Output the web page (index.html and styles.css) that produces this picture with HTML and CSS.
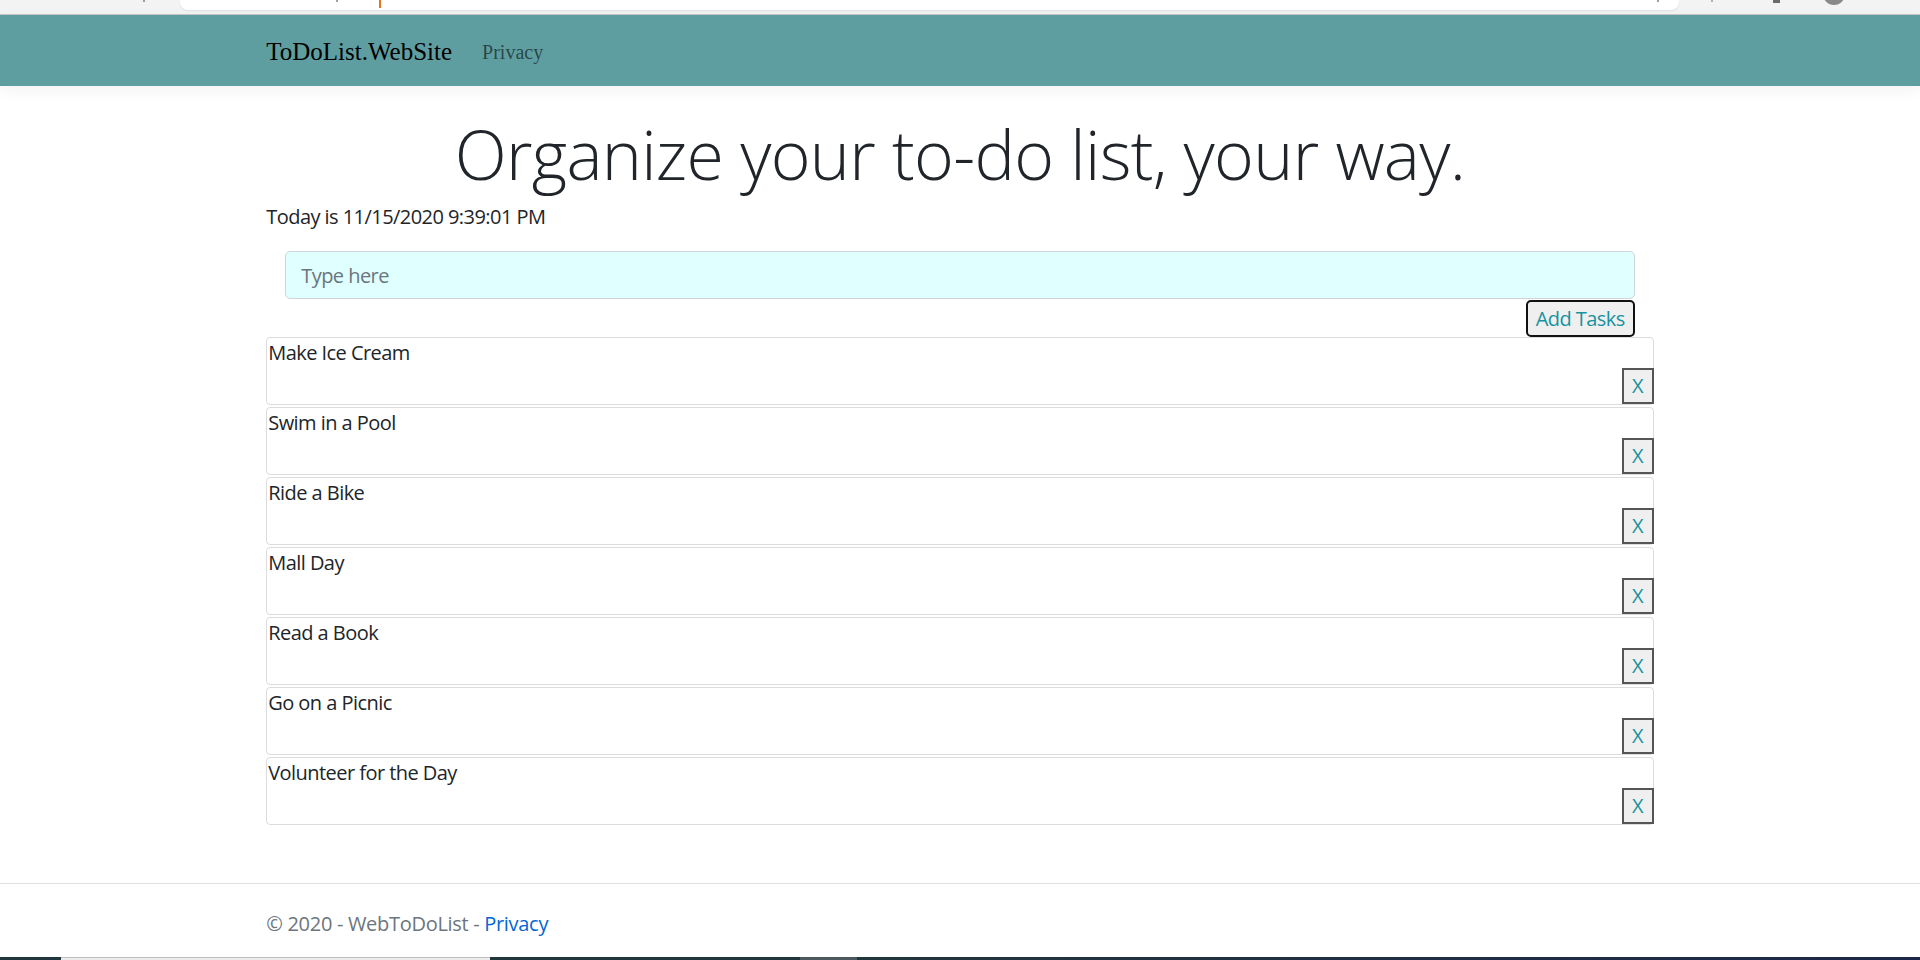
FILE: index.html
```html
<!DOCTYPE html>
<html lang="en">
<head>
<meta charset="utf-8">
<title>ToDoList.WebSite</title>
<link rel="stylesheet" href="styles.css">
</head>
<body>
<div class="page">
  <div class="chrome">
    <div class="chrome-left"><span class="tick"></span></div>
    <div class="addr">
      <span class="addr-mark"></span>
      <span class="addr-caret"></span>
      <span class="addr-spacer"></span>
      <span class="addr-mark"></span>
    </div>
    <div class="chrome-right">
      <span class="tick"></span>
      <span class="min-icon"></span>
      <span class="avatar"></span>
    </div>
  </div>

  <header class="navbar">
    <div class="container nav-inner">
      <a class="brand" href="#">ToDoList.WebSite</a>
      <a class="nav-link" href="#">Privacy</a>
    </div>
  </header>

  <main class="container main">
    <h1 class="display">Organize your to-do list, your way.</h1>
    <p class="today">Today is 11/15/2020 9:39:01 PM</p>
    <form class="add-form">
      <input class="task-input" type="text" placeholder="Type here">
      <div class="add-row">
        <button class="add-btn" type="button">Add Tasks</button>
      </div>
    </form>
    <ul class="tasks">
      <li class="task"><span class="task-text">Make Ice Cream</span><button class="del" type="button">X</button></li>
      <li class="task"><span class="task-text">Swim in a Pool</span><button class="del" type="button">X</button></li>
      <li class="task"><span class="task-text">Ride a Bike</span><button class="del" type="button">X</button></li>
      <li class="task"><span class="task-text">Mall Day</span><button class="del" type="button">X</button></li>
      <li class="task"><span class="task-text">Read a Book</span><button class="del" type="button">X</button></li>
      <li class="task"><span class="task-text">Go on a Picnic</span><button class="del" type="button">X</button></li>
      <li class="task"><span class="task-text">Volunteer for the Day</span><button class="del" type="button">X</button></li>
    </ul>
  </main>

  <footer class="footer">
    <div class="container footer-inner">© 2020 - WebToDoList - <a class="footer-link" href="#">Privacy</a></div>
  </footer>

  <div class="taskbar">
    <span class="tb-dark tb-start"></span>
    <span class="tb-light"></span>
    <span class="tb-dark tb-mid"></span>
    <span class="tb-grey"></span>
    <span class="tb-rest"></span>
  </div>
</div>
</body>
</html>
```

FILE: styles.css
```css
* { box-sizing: border-box; }

html, body {
  margin: 0;
  padding: 0;
  height: 100%;
}

body {
  font-family: "Open Sans", "Noto Sans", sans-serif;
  font-size: 20px;
  line-height: 1.5;
  letter-spacing: -0.55px;
  color: #212529;
  background: #fff;
}

.page {
  height: 960px;
  display: flex;
  flex-direction: column;
  overflow: hidden;
}

/* browser chrome remnant */
.chrome {
  height: 15px;
  flex: none;
  display: flex;
  background: #f3f3f3;
  border-bottom: 1px solid #c6c6c6;
}
.chrome-left {
  width: 180px;
  position: relative;
}
.chrome-left .tick {
  position: absolute;
  left: 143px;
  top: 0;
  width: 2px;
  height: 2px;
  background: #9a9a9a;
}
.addr {
  width: 1499px;
  height: 10px;
  background: #fff;
  border-radius: 0 0 8px 8px;
  box-shadow: 0 1px 2px rgba(0, 0, 0, 0.08);
  display: flex;
  align-items: flex-start;
  padding-left: 156px;
  padding-right: 20px;
}
.addr-mark {
  width: 2px;
  height: 2px;
  background: #a0a0a0;
}
.addr-caret {
  width: 2px;
  height: 8px;
  margin-left: 41px;
  background: #e8711a;
}
.addr-spacer { flex: 1; }
.chrome-right {
  flex: 1;
  display: flex;
  align-items: flex-start;
  padding-left: 32px;
}
.chrome-right .tick {
  width: 2px;
  height: 2px;
  background: #b0b0b0;
}
.min-icon {
  width: 7px;
  height: 3px;
  margin-left: 60px;
  background: #6b6b6b;
}
.avatar {
  width: 22px;
  height: 22px;
  margin-left: 43px;
  margin-top: -17px;
  border-radius: 50%;
  background: #8a8888;
}

/* navbar */
.container {
  width: 1425px;
  margin: 0 auto;
  padding: 0 18.75px;
}
.navbar {
  flex: none;
  height: 71px;
  background: #5f9ea0;
  box-shadow: 0 5px 14px rgba(0, 0, 0, 0.05);
  position: relative;
  z-index: 1;
}
.nav-inner {
  height: 100%;
  display: flex;
  align-items: center;
  padding-top: 2px;
  letter-spacing: 0;
}
.brand {
  font-family: "Liberation Serif", "Times New Roman", serif;
  font-size: 25px;
  color: #000;
  text-decoration: none;
  margin-right: 20px;
}
.nav-link {
  font-family: "Liberation Serif", "Times New Roman", serif;
  font-size: 20px;
  color: rgba(0, 0, 0, 0.58);
  text-decoration: none;
  padding: 0 10px;
}

/* main */
.main {
  flex: 1;
  padding-top: 20px;
}
.display {
  margin: 6px 0 6px;
  font-size: 68px;
  font-weight: 300;
  line-height: 84px;
  letter-spacing: -0.7px;
  text-align: center;
  color: #212529;
}
.today {
  margin: 0 0 19px;
  line-height: 30px;
}
.add-form {
  margin: 0 19px;
}
.task-input {
  display: block;
  width: 100%;
  height: 48px;
  padding: 0 15px;
  font: inherit;
  letter-spacing: inherit;
  color: #495057;
  background: #e0ffff;
  border: 1px solid #ced4da;
  border-radius: 5px;
  outline: none;
}
.task-input::placeholder {
  color: #6c757d;
}
.add-row {
  display: flex;
  justify-content: flex-end;
  padding-top: 1px;
}
.add-btn {
  height: 37px;
  padding: 0 8px;
  font: inherit;
  letter-spacing: inherit;
  line-height: 1;
  color: #17939f;
  background: #efefef;
  border: 2px solid #111;
  border-radius: 5px;
}

.tasks {
  list-style: none;
  margin: 0;
  padding: 0;
  display: flex;
  flex-direction: column;
  gap: 2px;
}
.task {
  display: flex;
  flex-direction: column;
  border: 1px solid #dcdcdc;
  border-radius: 4px;
  padding-left: 1px;
}
.task-text {
  line-height: 30px;
}
.del {
  align-self: flex-end;
  width: 32px;
  height: 36px;
  margin-right: -1px;
  padding: 0;
  font: inherit;
  line-height: 1;
  color: #17939f;
  background: #efefef;
  border: 2px solid #555;
  border-radius: 0;
}

/* footer */
.footer {
  flex: none;
  height: 74px;
  border-top: 1px solid #dee2e6;
  color: #6c757d;
}
.footer-inner {
  padding-top: 25px;
  line-height: 30px;
  letter-spacing: -0.3px;
}
.footer-link {
  color: #0366d6;
  text-decoration: none;
}

/* taskbar remnant */
.taskbar {
  flex: none;
  height: 3px;
  display: flex;
}
.tb-dark { background: #22363d; }
.tb-start { width: 61px; }
.tb-light { width: 429px; background: #ececec; border-top: 1px solid #bdbdbd; }
.tb-mid { width: 310px; }
.tb-grey { width: 57px; background: #4c5a60; }
.tb-rest { flex: 1; background: linear-gradient(90deg, #22363d, #1d2848); }
```
